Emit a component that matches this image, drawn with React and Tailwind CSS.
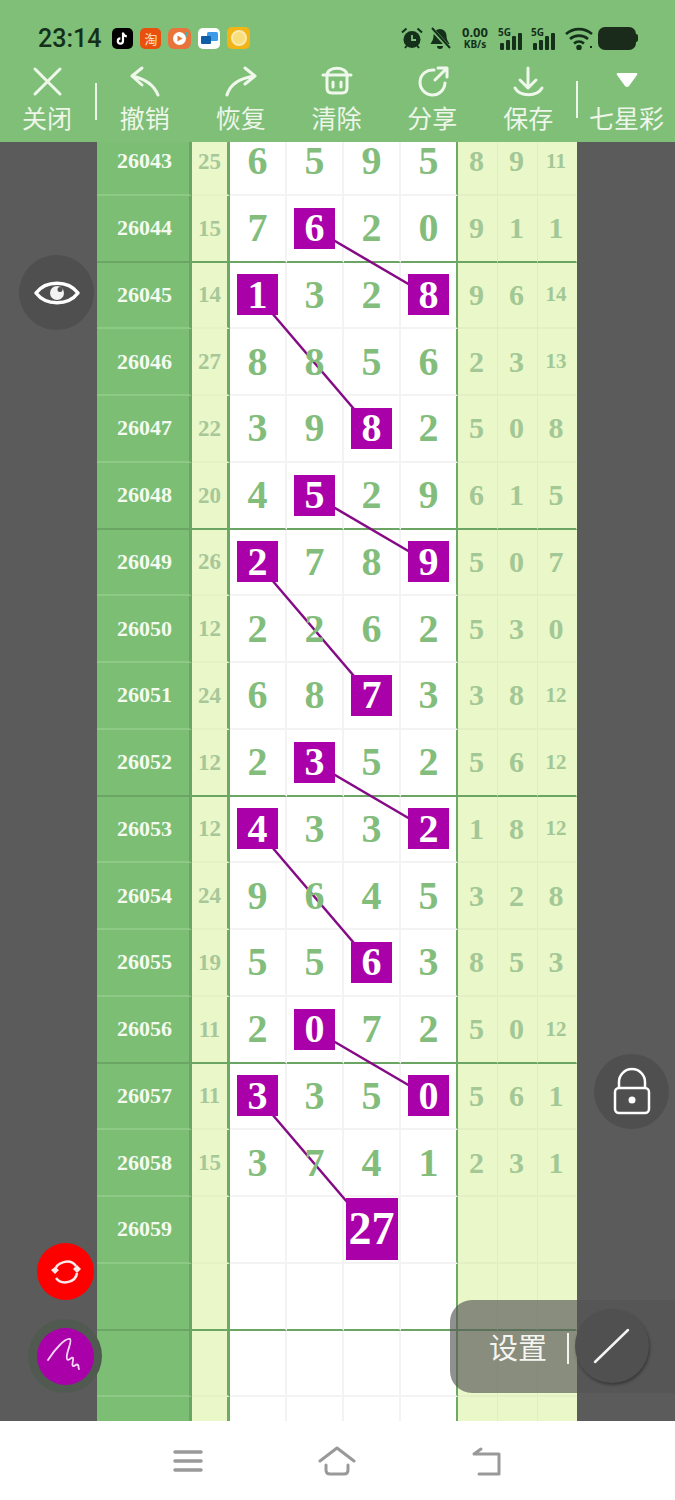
import { Fragment } from 'react';
import { clsx } from 'clsx';

// ── data ─────────────────────────────────────────────────────────────────────

// main digits: a number is plain, a [n] pair is a highlighted square
const ROWS = [
  ['26043', 25, [6, 5, 9, 5], [8, 9, 11]],
  ['26044', 15, [7, [6], 2, 0], [9, 1, 1]],
  ['26045', 14, [[1], 3, 2, [8]], [9, 6, 14]],
  ['26046', 27, [8, 8, 5, 6], [2, 3, 13]],
  ['26047', 22, [3, 9, [8], 2], [5, 0, 8]],
  ['26048', 20, [4, [5], 2, 9], [6, 1, 5]],
  ['26049', 26, [[2], 7, 8, [9]], [5, 0, 7]],
  ['26050', 12, [2, 2, 6, 2], [5, 3, 0]],
  ['26051', 24, [6, 8, [7], 3], [3, 8, 12]],
  ['26052', 12, [2, [3], 5, 2], [5, 6, 12]],
  ['26053', 12, [[4], 3, 3, [2]], [1, 8, 12]],
  ['26054', 24, [9, 6, 4, 5], [3, 2, 8]],
  ['26055', 19, [5, 5, [6], 3], [8, 5, 3]],
  ['26056', 11, [2, [0], 7, 2], [5, 0, 12]],
  ['26057', 11, [[3], 3, 5, [0]], [5, 6, 1]],
  ['26058', 15, [3, 7, 4, 1], [2, 3, 1]],
  ['26059', '', ['', '', 'big', ''], ['', '', '']],
  ['', '', ['', '', '', ''], ['', '', '']],
  ['', '', ['', '', '', ''], ['', '', '']],
  ['', '', ['', '', '', ''], ['', '', '']],
];

// [row, col] → [row, col] pairs for the purple connectors
const LINKS = [
  [[1, 1], [2, 3]],
  [[2, 0], [4, 2]],
  [[5, 1], [6, 3]],
  [[6, 0], [8, 2]],
  [[9, 1], [10, 3]],
  [[10, 0], [12, 2]],
  [[13, 1], [14, 3]],
  [[14, 0], [16, 2]],
];

const colX = (c) => 257 + c * 57;
const rowY = (r) => 20 + r * 66.75;

// ── status bar ───────────────────────────────────────────────────────────────

function AppIcons() {
  return (
    <div className="flex items-center gap-[7px] ml-[11px]">
      <div className="w-[21px] h-[21px] rounded-[5px] bg-black flex items-center justify-center">
        <svg width="15" height="15" viewBox="0 0 15 15" fill="none">
          <path d="M8 1.5v8.5a2.6 2.6 0 1 1-2.6-2.6M8 2c.4 2 1.8 3.2 3.8 3.4" stroke="#fff" strokeWidth="2.2" />
        </svg>
      </div>
      <div className="w-[21px] h-[21px] rounded-[5px] bg-[#E9500E] flex items-center justify-center text-[13px] leading-none text-[#FFE3C4] font-['Noto_Sans_CJK_SC',sans-serif]">淘</div>
      <div className="w-[23px] h-[21px] rounded-[6px] bg-[#E8743B] flex items-center justify-center">
        <svg width="15" height="15" viewBox="0 0 15 15">
          <circle cx="7.5" cy="7.5" r="6.5" fill="#fff" />
          <path d="M5.5 4.5l5 3-5 3z" fill="#E8743B" />
          <path d="M13 1l2 0 0 6z" fill="#3CB8B0" />
        </svg>
      </div>
      <div className="w-[22px] h-[21px] rounded-[5px] bg-white flex items-center justify-center">
        <svg width="18" height="15" viewBox="0 0 18 15">
          <rect x="7" y="1" width="11" height="9" rx="1.5" fill="#3C9BE8" />
          <rect x="1" y="5" width="10" height="8" rx="1" fill="#0E5FA8" />
        </svg>
      </div>
      <div className="w-[23px] h-[22px] rounded-[5px] bg-[#F3B416] flex items-center justify-center">
        <div className="w-[16px] h-[16px] rounded-full bg-[#F9DE7E] border-2 border-[#FBEBB0]" />
      </div>
    </div>
  );
}

function Signal() {
  return (
    <div className="relative w-[27px] h-[23px]">
      <span className="absolute left-0 top-[-1px] text-[10px] leading-[12px] font-bold">5G</span>
      <svg className="absolute left-0 top-0" width="27" height="23" viewBox="0 0 27 23" fill="#14301A">
        <rect x="2" y="16" width="4" height="7" rx="1" />
        <rect x="8" y="13" width="4" height="10" rx="1" />
        <rect x="14" y="9" width="4" height="14" rx="1" />
        <rect x="20" y="6" width="4" height="17" rx="1" />
      </svg>
    </div>
  );
}

function StatusIcons() {
  return (
    <div className="flex items-center ml-auto mr-[37px] text-[#14301A] font-['Noto_Sans',sans-serif]">
      <svg width="22" height="23" viewBox="0 0 22 23" fill="#14301A">
        <circle cx="11" cy="12.5" r="8.5" />
        <path d="M1 5.5L5.5 1.5M21 5.5L16.5 1.5M4 21l2-2.5M18 21l-2-2.5" stroke="#14301A" strokeWidth="2" />
        <path d="M11 8v5h4" stroke="#7FBF78" strokeWidth="1.8" fill="none" />
      </svg>
      <svg className="ml-[6px]" width="22" height="23" viewBox="0 0 22 23" fill="#14301A">
        <path d="M11 2a6.5 6.5 0 0 0-6.5 6.5c0 5-2.5 7-3 8.5h19c-.5-1.500-3-3.500-3-8.500A6.500 6.500 0 0 0 11 2zM8 19h6a3 3 0 0 1-6 0z" />
        <path d="M2 1l19 21" stroke="#7FBF78" strokeWidth="4" />
        <path d="M3 1l18 20" stroke="#14301A" strokeWidth="2" />
      </svg>
      <div className="ml-[9px] w-[30px] text-center font-bold">
        <div className="text-[13px] leading-[13px]">0.00</div>
        <div className="text-[10px] leading-[11px]">KB/s</div>
      </div>
      <div className="ml-[8px]"><Signal /></div>
      <div className="ml-[6px]"><Signal /></div>
      <svg className="ml-[7px]" width="28" height="23" viewBox="0 0 28 23" fill="none" stroke="#14301A" strokeWidth="2.6">
        <path d="M1 7c7.500-6.500 18.500-6.500 26 0M5 12c5-4.500 13-4.500 18 0M9 16.500c3-2.500 7-2.500 10 0" />
        <circle cx="14" cy="20.500" r="1.500" fill="#14301A" />
        <rect x="25" y="19" width="2" height="2" fill="#14301A" stroke="none" />
      </svg>
      <div className="ml-[5px] w-[38px] h-[23px] rounded-[7px] bg-[#1A2B1C]" />
      <div className="w-[2px] h-[8px] rounded-r-sm bg-[#1A2B1C]" />
    </div>
  );
}

// ── toolbar ──────────────────────────────────────────────────────────────────

const TOOL_ICONS = {
  close: <path d="M8 6l25 25M33 6L8 31" />,
  undo: <path d="M33 32C29 22 21 16 7 13M7 13l10-8M7 13l10 9" />,
  redo: <path d="M6 32C9 22 18 15 34 13M34 13L24 5M34 13L24 21" />,
  clear: (
    <>
      <path d="M6 12h28M10 12c0-9 20-9 20 0M10 12v13q0 5 5 5h10q5 0 5-5V12" />
      <path d="M16 19v5M24 19v5" />
    </>
  ),
  share: <path d="M22 7a12.500 12.500 0 1 0 11 13M23 17L35 5M26 5h9v9" />,
  save: <path d="M20 5v20M12 17l8 8 8-8M7 25c5 9 22 9 27 0" />,
};

const TOOLS = [
  { key: 'undo', label: '撤销' },
  { key: 'redo', label: '恢复' },
  { key: 'clear', label: '清除' },
  { key: 'share', label: '分享' },
  { key: 'save', label: '保存' },
];

function Tool({ icon, label, className }) {
  return (
    <div className={clsx('flex flex-col items-center', className)}>
      <svg width="40" height="34" viewBox="0 0 40 34" fill="none" stroke="#F0F8EC" strokeWidth="3" strokeLinecap="round" strokeLinejoin="round">
        {TOOL_ICONS[icon]}
      </svg>
      {label}
    </div>
  );
}

function Toolbar() {
  const label = (t) => <span className="mt-[3px] text-[25px] leading-[34px] text-[#EDF6E9]">{t}</span>;
  return (
    <div className="flex items-start h-[79px] font-['Noto_Sans_CJK_SC',sans-serif]">
      <Tool icon="close" label={label('关闭')} className="w-[96px] -ml-[1px]" />
      <div className="w-[2px] h-[37px] mt-[20px] bg-[#EDF6E9]" />
      {TOOLS.map((t) => (
        <Tool key={t.key} icon={t.key} label={label(t.label)} className="w-[96px]" />
      ))}
      <div className="w-[2px] h-[37px] mt-[18px] bg-[#EDF6E9]" />
      <div className="flex flex-col items-center w-[97px]">
        <svg width="40" height="34" viewBox="0 0 40 34">
          <path d="M11 10h18q2 0 1 2l-8 11q-2 2-4 0l-8-11q-1-2 1-2z" fill="#fff" />
        </svg>
        {label('七星彩')}
      </div>
    </div>
  );
}

// ── table ────────────────────────────────────────────────────────────────────

function MainCell({ value }) {
  if (value === 'big') {
    return (
      <span className="relative z-20 w-[52px] h-[62px] bg-[#AA00AA] text-white text-[46px] flex items-center justify-center">27</span>
    );
  }
  if (Array.isArray(value)) {
    return (
      <span className="relative z-20 w-[41px] h-[41px] bg-[#AA00AA] text-white text-[40px] flex items-center justify-center">{value[0]}</span>
    );
  }
  // digits sit above the connector lines
  return <span className="relative z-20 text-[40px] text-[#83BD7C]">{value}</span>;
}

function Row({ row, thick }) {
  const [id, sum, main, side] = row;
  const base = 'h-full flex items-center justify-center border-b-2';
  const line = thick ? 'border-b-[#6AA563]' : '';
  return (
    <div className="grid grid-cols-[95px_38px_57px_57px_57px_57px_40px_40px_39px] h-[66.75px] font-['Liberation_Serif',serif] font-bold leading-none">
      <div className={clsx(base, 'bg-[#7CBE74] border-r-[3px] border-r-[#6AA563] text-[22px] text-[#F4FAF0] pl-[3px]', thick ? line : 'border-b-[#8DCA85]')}>{id}</div>
      <div className={clsx(base, 'bg-[#E9F7C9] border-r-[3px] border-r-[#6FA968] text-[23px] text-[#A8C799]', thick ? line : 'border-b-[#E4F2C5]')}>{sum}</div>
      {main.map((v, i) => (
        <div key={i} className={clsx(base, 'bg-white border-r-2', i === 3 ? 'border-r-[#6FA968]' : 'border-r-[#F3F3F3]', thick ? line : 'border-b-[#F3F3F3]')}>
          <MainCell value={v} />
        </div>
      ))}
      {side.map((v, i) => (
        <div key={i} className={clsx(base, 'bg-[#E9F7C9] text-[#A3C795] border-r pr-[2px]', v > 9 ? 'text-[21px]' : 'text-[30px]', i === 2 ? 'border-r-transparent' : 'border-r-[#DFEEC0]', thick ? line : 'border-b-[#E2F0C3]')}>{v}</div>
      ))}
    </div>
  );
}

function Table() {
  return (
    <div className="relative flex-1 bg-[#5B5B5B] overflow-hidden pl-[97px]">
      <div className="-mt-[13px]">
        {ROWS.map((row, i) => (
          <Row key={i} row={row} thick={i % 4 === 1} />
        ))}
      </div>
      <svg className="absolute left-0 top-0 z-10" width="675" height="1279" fill="none" stroke="#850A85" strokeWidth="2.5">
        {LINKS.map(([a, b], i) => (
          <line key={i} x1={colX(a[1])} y1={rowY(a[0])} x2={colX(b[1])} y2={rowY(b[0])} />
        ))}
      </svg>
    </div>
  );
}

// ── floating controls ────────────────────────────────────────────────────────

function Floating() {
  return (
    <Fragment>
      <div className="absolute left-[19px] top-[255px] z-30 w-[75px] h-[75px] rounded-full bg-[#4F4F4F] flex items-center justify-center">
        <svg width="48" height="34" viewBox="0 0 48 34" fill="none">
          <path d="M3 17C13 4 35 4 45 17 35 30 13 30 3 17z" stroke="#fff" strokeWidth="3.500" strokeLinejoin="round" />
          <circle cx="24" cy="17" r="7" fill="#F2F2F2" />
          <circle cx="27" cy="13.500" r="2.500" fill="#4F4F4F" />
        </svg>
      </div>
      <div className="absolute left-[594px] top-[1054px] z-30 w-[75px] h-[75px] rounded-full bg-[#4F4F4F] flex items-center justify-center pb-[2px]">
        <svg width="40" height="50" viewBox="0 0 40 50" fill="none" stroke="#fff" strokeWidth="2.500">
          <path d="M7 22V16a13 13 0 0 1 26 0v6" />
          <rect x="3" y="22" width="34" height="25" rx="4" />
          <circle cx="20" cy="34" r="3.500" fill="#fff" stroke="none" />
        </svg>
      </div>
      <div className="absolute left-[37px] top-[1243px] z-30 w-[57px] h-[57px] rounded-full bg-[#FF0000] flex items-center justify-center">
        <svg width="32" height="28" viewBox="0 0 32 28" fill="none" stroke="#FFE9E9" strokeWidth="2.500">
          <path d="M5 13C6 4 20 0 26 8M27 15C26 24 12 28 6 20" />
          <path d="M1 12l4 4 4-4-4-3z M23 11l4-4 4 4-4 4z" fill="#FFE9E9" stroke="none" />
        </svg>
      </div>
      <div className="absolute left-[28px] top-[1319px] z-30 w-[74px] h-[74px] rounded-full bg-[#515A51] flex items-center justify-center">
        <div className="w-[57px] h-[57px] rounded-full bg-[#AA00AA] flex items-center justify-center">
          <svg width="40" height="42" viewBox="0 0 40 42" fill="none" stroke="#F6D6F6" strokeWidth="1.800" strokeLinecap="round" strokeLinejoin="round">
            <path d="M3 25C10 14 20 3 25 4c3 2-5 15-3 20 1 3 5-3 6-1 1 3-2 6 0 8 2 1 3-3 5-1 1 1 0 3 1 4" />
          </svg>
        </div>
      </div>

      <div className="absolute left-[450px] top-[1300px] z-30 w-[225px] h-[93px] rounded-l-[22px] bg-[#555555]/65 flex items-center font-['Noto_Sans_CJK_SC',sans-serif]">
        <span className="ml-[39px] text-[29px] leading-none text-[#F4F4F0]">设置</span>
        <div className="ml-[20px] mt-[4px] w-[2px] h-[31px] bg-[#F4F4F0]" />
        <div className="ml-[6px] -mt-[2px] w-[74px] h-[74px] rounded-full bg-[#505050] shadow-[1px_2px_3px_rgba(0,0,0,0.35)] flex items-center justify-center">
          <svg width="38" height="36" viewBox="0 0 38 36" stroke="#F4F4F4" strokeWidth="2.500" strokeLinecap="round">
            <line x1="2" y1="34" x2="35" y2="2" />
          </svg>
        </div>
      </div>
    </Fragment>
  );
}

// ── page ─────────────────────────────────────────────────────────────────────

export default function App() {
  return (
    <div className="relative w-[675px] h-[1500px] flex flex-col overflow-hidden bg-white">
      <div className="bg-[#7FBF78]">
        <div className="flex items-center h-[63px] pt-[13px]">
          <span className="ml-[38px] text-[25px] leading-none font-medium text-[#14301A] font-['Roboto',sans-serif]">23:14</span>
          <AppIcons />
          <StatusIcons />
        </div>
        <Toolbar />
      </div>

      <Table />
      <Floating />

      {/* system nav */}
      <div className="h-[79px] flex items-center pl-[170px]">
        <svg width="36" height="24" viewBox="0 0 36 24" fill="none" stroke="#999999" strokeWidth="3.500" strokeLinecap="round">
          <path d="M5 3h26M5 12h26M5 21h26" />
        </svg>
        <svg className="ml-[112px]" width="38" height="30" viewBox="0 0 38 30" fill="none" stroke="#999999" strokeWidth="3" strokeLinecap="round" strokeLinejoin="round">
          <path d="M2 15L19 2l17 13M8 19v5q0 4 4 4h14q4 0 4-4v-5" />
        </svg>
        <svg className="ml-[112px]" width="38" height="30" viewBox="0 0 38 30" fill="none" stroke="#999999" strokeWidth="3" strokeLinecap="round" strokeLinejoin="round">
          <path d="M6 8h25v20H11M13 3L6 8" />
        </svg>
      </div>
    </div>
  );
}
